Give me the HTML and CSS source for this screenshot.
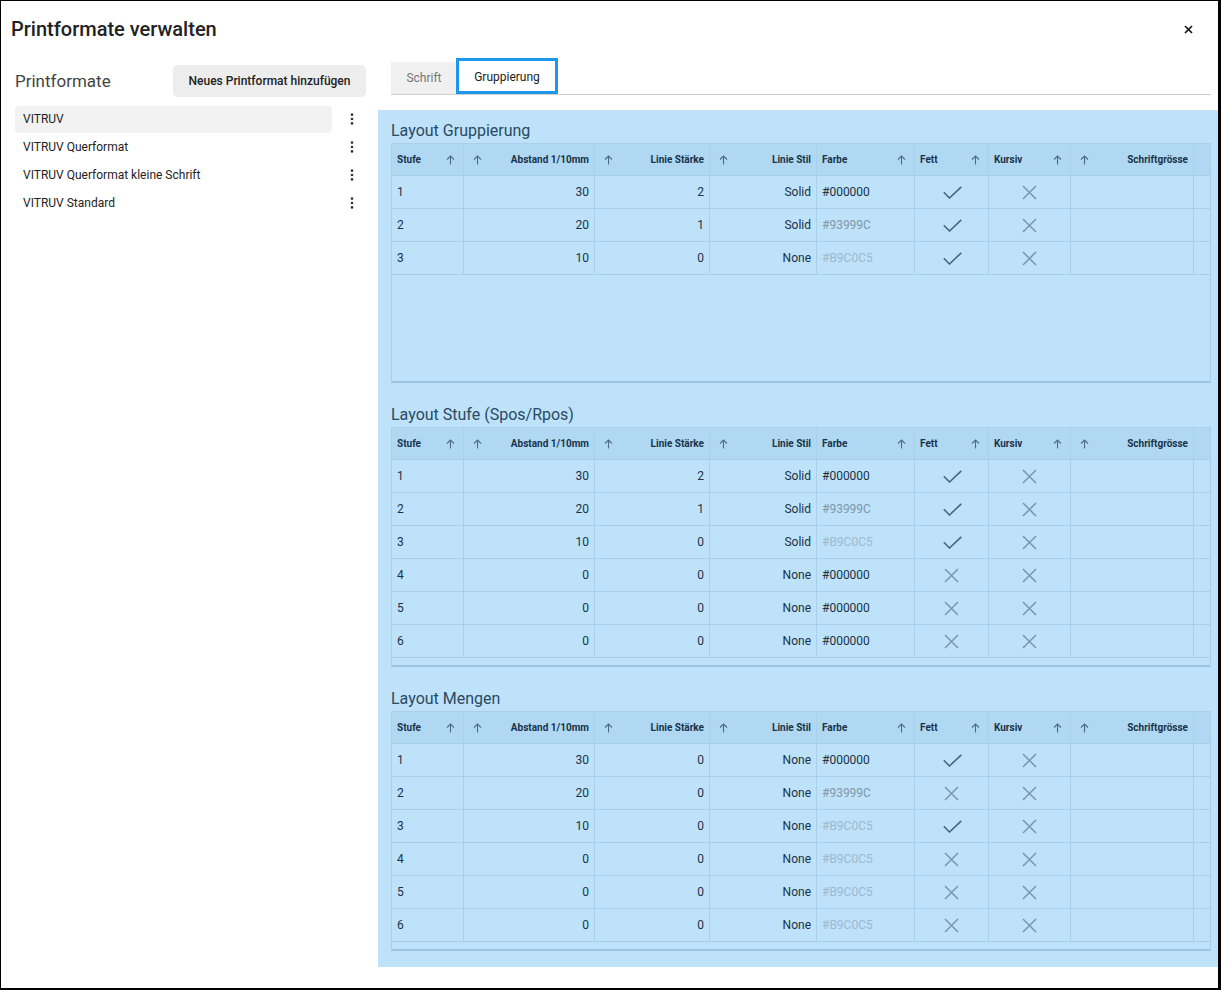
FILE: index.html
```html
<!DOCTYPE html>
<html lang="de">
<head>
<meta charset="utf-8">
<title>Printformate verwalten</title>
<link rel="stylesheet" href="styles.css">
</head>
<body>
<svg class="defs" width="0" height="0" aria-hidden="true">
  <symbol id="arrow" viewBox="0 0 9 10"><path d="M4.5 9.5V1M1 4.5L4.5 1L8 4.5" fill="none" stroke="currentColor" stroke-width="1.1"/></symbol>
  <symbol id="chk" viewBox="0 0 19 13"><path d="M0.8 6.3L6.5 12L18.3 0.8" fill="none" stroke="currentColor" stroke-width="1.6"/></symbol>
  <symbol id="crs" viewBox="0 0 15 15"><path d="M1 1L14 14M14 1L1 14" fill="none" stroke="currentColor" stroke-width="1.5"/></symbol>
  <symbol id="kebab" viewBox="0 0 4 12"><circle cx="2" cy="1.6" r="1.3"/><circle cx="2" cy="6" r="1.3"/><circle cx="2" cy="10.4" r="1.3"/></symbol>
</svg>
<div class="window">
  <header class="titlebar">
    <h1 class="title">Printformate verwalten</h1>
    <button class="close" aria-label="Schliessen"><svg width="9" height="9" viewBox="0 0 9 9"><path d="M1 1L8 8M8 1L1 8" fill="none" stroke="#111" stroke-width="1.6"/></svg></button>
  </header>
  <div class="main">
    <aside class="sidebar">
      <div class="side-head">
        <h2 class="side-title">Printformate</h2>
        <button class="btn">Neues Printformat hinzufügen</button>
      </div>
      <ul class="list">
        <li class="item active"><span class="item-label">VITRUV</span><span class="kebab"><svg width="4" height="12"><use href="#kebab"/></svg></span></li>
        <li class="item"><span class="item-label">VITRUV Querformat</span><span class="kebab"><svg width="4" height="12"><use href="#kebab"/></svg></span></li>
        <li class="item"><span class="item-label">VITRUV Querformat kleine Schrift</span><span class="kebab"><svg width="4" height="12"><use href="#kebab"/></svg></span></li>
        <li class="item"><span class="item-label">VITRUV Standard</span><span class="kebab"><svg width="4" height="12"><use href="#kebab"/></svg></span></li>
      </ul>
    </aside>
    <main class="content">
      <nav class="tabs">
        <div class="tab">Schrift</div>
        <div class="tab active">Gruppierung</div>
      </nav>
      <div class="panel">

        <section class="section">
          <h3 class="section-title">Layout Gruppierung</h3>
          <div class="grid">
            <div class="head">
              <div class="h">Stufe<svg class="ar"><use href="#arrow"/></svg></div>
              <div class="h num"><svg class="ar"><use href="#arrow"/></svg>Abstand 1/10mm</div>
              <div class="h num"><svg class="ar"><use href="#arrow"/></svg>Linie Stärke</div>
              <div class="h num"><svg class="ar"><use href="#arrow"/></svg>Linie Stil</div>
              <div class="h">Farbe<svg class="ar"><use href="#arrow"/></svg></div>
              <div class="h">Fett<svg class="ar"><use href="#arrow"/></svg></div>
              <div class="h">Kursiv<svg class="ar"><use href="#arrow"/></svg></div>
              <div class="h num"><svg class="ar"><use href="#arrow"/></svg>Schriftgrösse</div>
              <div class="h"></div>
            </div>
            <div class="row"><div class="c">1</div><div class="c r">30</div><div class="c r">2</div><div class="c r">Solid</div><div class="c k">#000000</div><div class="c m"><svg class="chk"><use href="#chk"/></svg></div><div class="c m"><svg class="crs"><use href="#crs"/></svg></div><div class="c"></div><div class="c"></div></div>
            <div class="row"><div class="c">2</div><div class="c r">20</div><div class="c r">1</div><div class="c r">Solid</div><div class="c g1">#93999C</div><div class="c m"><svg class="chk"><use href="#chk"/></svg></div><div class="c m"><svg class="crs"><use href="#crs"/></svg></div><div class="c"></div><div class="c"></div></div>
            <div class="row"><div class="c">3</div><div class="c r">10</div><div class="c r">0</div><div class="c r">None</div><div class="c g2">#B9C0C5</div><div class="c m"><svg class="chk"><use href="#chk"/></svg></div><div class="c m"><svg class="crs"><use href="#crs"/></svg></div><div class="c"></div><div class="c"></div></div>
          </div>
        </section>

        <section class="section">
          <h3 class="section-title">Layout Stufe (Spos/Rpos)</h3>
          <div class="grid">
            <div class="head">
              <div class="h">Stufe<svg class="ar"><use href="#arrow"/></svg></div>
              <div class="h num"><svg class="ar"><use href="#arrow"/></svg>Abstand 1/10mm</div>
              <div class="h num"><svg class="ar"><use href="#arrow"/></svg>Linie Stärke</div>
              <div class="h num"><svg class="ar"><use href="#arrow"/></svg>Linie Stil</div>
              <div class="h">Farbe<svg class="ar"><use href="#arrow"/></svg></div>
              <div class="h">Fett<svg class="ar"><use href="#arrow"/></svg></div>
              <div class="h">Kursiv<svg class="ar"><use href="#arrow"/></svg></div>
              <div class="h num"><svg class="ar"><use href="#arrow"/></svg>Schriftgrösse</div>
              <div class="h"></div>
            </div>
            <div class="row"><div class="c">1</div><div class="c r">30</div><div class="c r">2</div><div class="c r">Solid</div><div class="c k">#000000</div><div class="c m"><svg class="chk"><use href="#chk"/></svg></div><div class="c m"><svg class="crs"><use href="#crs"/></svg></div><div class="c"></div><div class="c"></div></div>
            <div class="row"><div class="c">2</div><div class="c r">20</div><div class="c r">1</div><div class="c r">Solid</div><div class="c g1">#93999C</div><div class="c m"><svg class="chk"><use href="#chk"/></svg></div><div class="c m"><svg class="crs"><use href="#crs"/></svg></div><div class="c"></div><div class="c"></div></div>
            <div class="row"><div class="c">3</div><div class="c r">10</div><div class="c r">0</div><div class="c r">Solid</div><div class="c g2">#B9C0C5</div><div class="c m"><svg class="chk"><use href="#chk"/></svg></div><div class="c m"><svg class="crs"><use href="#crs"/></svg></div><div class="c"></div><div class="c"></div></div>
            <div class="row"><div class="c">4</div><div class="c r">0</div><div class="c r">0</div><div class="c r">None</div><div class="c k">#000000</div><div class="c m"><svg class="crs"><use href="#crs"/></svg></div><div class="c m"><svg class="crs"><use href="#crs"/></svg></div><div class="c"></div><div class="c"></div></div>
            <div class="row"><div class="c">5</div><div class="c r">0</div><div class="c r">0</div><div class="c r">None</div><div class="c k">#000000</div><div class="c m"><svg class="crs"><use href="#crs"/></svg></div><div class="c m"><svg class="crs"><use href="#crs"/></svg></div><div class="c"></div><div class="c"></div></div>
            <div class="row"><div class="c">6</div><div class="c r">0</div><div class="c r">0</div><div class="c r">None</div><div class="c k">#000000</div><div class="c m"><svg class="crs"><use href="#crs"/></svg></div><div class="c m"><svg class="crs"><use href="#crs"/></svg></div><div class="c"></div><div class="c"></div></div>
          </div>
        </section>

        <section class="section">
          <h3 class="section-title">Layout Mengen</h3>
          <div class="grid">
            <div class="head">
              <div class="h">Stufe<svg class="ar"><use href="#arrow"/></svg></div>
              <div class="h num"><svg class="ar"><use href="#arrow"/></svg>Abstand 1/10mm</div>
              <div class="h num"><svg class="ar"><use href="#arrow"/></svg>Linie Stärke</div>
              <div class="h num"><svg class="ar"><use href="#arrow"/></svg>Linie Stil</div>
              <div class="h">Farbe<svg class="ar"><use href="#arrow"/></svg></div>
              <div class="h">Fett<svg class="ar"><use href="#arrow"/></svg></div>
              <div class="h">Kursiv<svg class="ar"><use href="#arrow"/></svg></div>
              <div class="h num"><svg class="ar"><use href="#arrow"/></svg>Schriftgrösse</div>
              <div class="h"></div>
            </div>
            <div class="row"><div class="c">1</div><div class="c r">30</div><div class="c r">0</div><div class="c r">None</div><div class="c k">#000000</div><div class="c m"><svg class="chk"><use href="#chk"/></svg></div><div class="c m"><svg class="crs"><use href="#crs"/></svg></div><div class="c"></div><div class="c"></div></div>
            <div class="row"><div class="c">2</div><div class="c r">20</div><div class="c r">0</div><div class="c r">None</div><div class="c g1">#93999C</div><div class="c m"><svg class="crs"><use href="#crs"/></svg></div><div class="c m"><svg class="crs"><use href="#crs"/></svg></div><div class="c"></div><div class="c"></div></div>
            <div class="row"><div class="c">3</div><div class="c r">10</div><div class="c r">0</div><div class="c r">None</div><div class="c g2">#B9C0C5</div><div class="c m"><svg class="chk"><use href="#chk"/></svg></div><div class="c m"><svg class="crs"><use href="#crs"/></svg></div><div class="c"></div><div class="c"></div></div>
            <div class="row"><div class="c">4</div><div class="c r">0</div><div class="c r">0</div><div class="c r">None</div><div class="c g2">#B9C0C5</div><div class="c m"><svg class="crs"><use href="#crs"/></svg></div><div class="c m"><svg class="crs"><use href="#crs"/></svg></div><div class="c"></div><div class="c"></div></div>
            <div class="row"><div class="c">5</div><div class="c r">0</div><div class="c r">0</div><div class="c r">None</div><div class="c g2">#B9C0C5</div><div class="c m"><svg class="crs"><use href="#crs"/></svg></div><div class="c m"><svg class="crs"><use href="#crs"/></svg></div><div class="c"></div><div class="c"></div></div>
            <div class="row"><div class="c">6</div><div class="c r">0</div><div class="c r">0</div><div class="c r">None</div><div class="c g2">#B9C0C5</div><div class="c m"><svg class="crs"><use href="#crs"/></svg></div><div class="c m"><svg class="crs"><use href="#crs"/></svg></div><div class="c"></div><div class="c"></div></div>
          </div>
        </section>

      </div>
    </main>
  </div>
</div>
</body>
</html>
```

FILE: styles.css
```css
* { box-sizing: border-box; margin: 0; padding: 0; }
html, body { background: #fff; }
body { font-family: Roboto, "Liberation Sans", Arial, sans-serif; color: #222; }
.defs { position: absolute; width: 0; height: 0; overflow: hidden; }

.window {
  width: 1221px; height: 990px;
  border: solid #000; border-width: 1px 3px 2px 1px;
  display: flex; flex-direction: column; overflow: hidden;
}
.titlebar {
  height: 56px; flex: none;
  display: flex; justify-content: space-between; align-items: flex-start;
  padding: 16px 25px 0 10px;
}
.title { font-size: 20px; font-weight: 500; line-height: 24px; color: #222; }
.close { width: 9px; height: 9px; margin-top: 8px; border: 0; background: none; display: block; }
.close svg { display: block; }

.main { flex: 1; display: flex; min-height: 0; }

.sidebar { width: 377px; flex: none; padding: 8px 12px 0 14px; }
.side-head { display: flex; justify-content: space-between; align-items: center; height: 32px; }
.side-title { font-size: 17px; font-weight: 400; color: #444; }
.btn {
  height: 32px; width: 193px; border: 0; border-radius: 5px; background: #ededed;
  font: 500 12px Roboto, "Liberation Sans", Arial, sans-serif; color: #222;
}
.list { margin-top: 8px; list-style: none; }
.item { display: flex; height: 28px; align-items: center; }
.item-label { flex: 1; height: 27px; line-height: 27px; padding-left: 8px; font-size: 12px; color: #222; border-radius: 4px; }
.item.active .item-label { background: #f2f2f3; }
.kebab { width: 34px; display: flex; justify-content: flex-end; padding-right: 12px; color: #333; fill: #333; }
.kebab svg { display: block; }

.content { flex: 1; display: flex; flex-direction: column; min-width: 0; }
.tabs {
  display: flex; align-items: flex-end; height: 37px; flex: none;
  margin: 1px 7px 0 13px; border-bottom: 1px solid #cfcfcf;
}
.tab {
  height: 32px; width: 66px; display: flex; align-items: center; justify-content: center;
  font-size: 12px; color: #777; background: #f0f0f0;
}
.tab.active { height: 36px; width: 102px; margin-left: -1px; border: 3px solid #1e96ea; background: #fff; color: #222; padding-top: 2px; }

.panel { margin-top: 15px; background: #bde2fa; padding: 9px 7px 16px 13px; height: 857px; }
.section + .section { margin-top: 20px; }
.section-title { font-size: 16px; line-height: 24px; font-weight: 400; color: #2a4a62; }

.grid {
  height: 240px; display: flex; flex-direction: column;
  border: 1px solid #a9cfea; border-bottom: 2px solid #9cc4e1;
}
.head, .row {
  display: grid;
  grid-template-columns: 72px 131px 115px 107px 98px 74px 82px 123px 1fr;
  flex: none;
}
.head { height: 32px; background: #b1d8f2; border-bottom: 1px solid #a6cde8; }
.row { height: 33px; border-bottom: 1px solid #a9d0eb; }

.h {
  display: flex; align-items: center; justify-content: space-between;
  border-right: 1px solid #a9d0eb;
  font-size: 10px; font-weight: 700; color: #17344c;
  padding: 0 8px 0 5px;
}
.h.num { padding: 0 5px 0 9px; }
.h:last-child, .c:last-child { border-right: 0; }
.ar { width: 9px; height: 10px; color: #4d6c84; display: block; }

.c {
  display: flex; align-items: center;
  border-right: 1px solid #a9d0eb;
  font-size: 12px; color: #1b3246; padding: 0 5px;
}
.c.r { justify-content: flex-end; }
.c.m { justify-content: center; }
.c.k { color: #1b3246; }
.c.g1 { color: #7f98ab; }
.c.g2 { color: #9bb9cf; }
.chk { width: 19px; height: 13px; color: #4b667b; display: block; margin-left: 2px; }
.crs { width: 15px; height: 15px; color: #7b96ab; display: block; }
```
